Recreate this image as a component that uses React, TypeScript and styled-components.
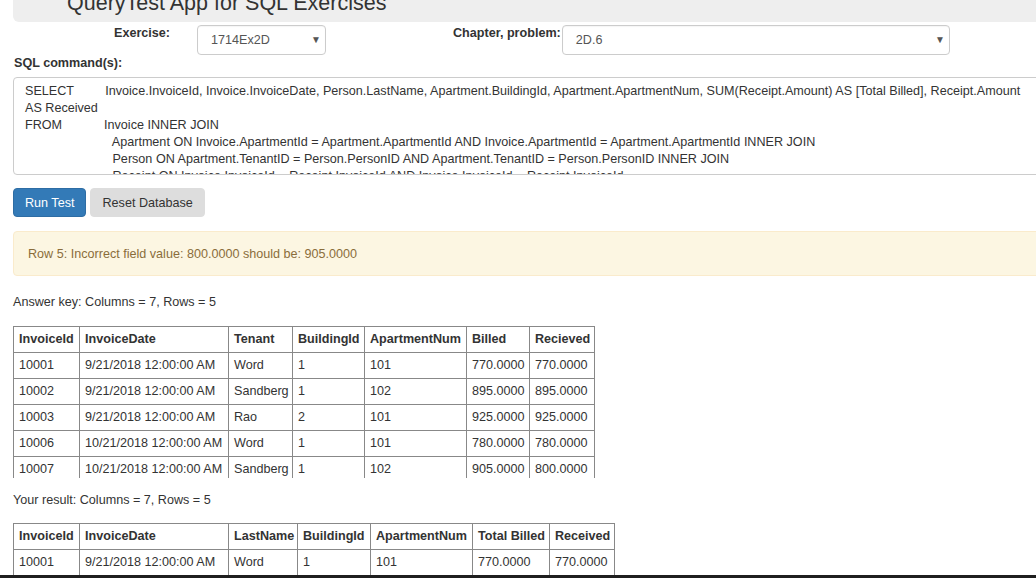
import React from 'react';
import styled, { createGlobalStyle } from 'styled-components';

const GlobalStyle = createGlobalStyle`
  html, body {
    margin: 0;
    padding: 0;
    background: #fff;
    overflow: hidden;
  }
  body {
    font-family: "Liberation Sans", Arial, sans-serif;
    font-size: 12.6px;
    color: #333;
  }
  * { box-sizing: border-box; }
`;

const Page = styled.div`
  padding-left: 13px;
  width: 1036px;
  height: 578px;
  overflow: hidden;
`;

const Banner = styled.div`
  width: calc(100% + 40px);
  height: 22px;
  background: #eee;
  border-bottom-left-radius: 6px;
  padding-left: 54px;
  overflow: hidden;
`;

const Title = styled.h1`
  margin: -8px 0 0 0;
  font-size: 21.5px;
  line-height: 22px;
  font-weight: normal;
  color: #333;
  white-space: nowrap;
`;

const FormRow = styled.div`
  display: flex;
  align-items: flex-start;
  margin-top: 3px;
  padding-left: 101px;
`;

const FieldLabel = styled.label<{ $gap: number }>`
  font-weight: bold;
  line-height: 14px;
  padding-top: 1px;
  margin-right: ${p => p.$gap}px;
  white-space: nowrap;
`;

const FakeSelect = styled.div<{ $w: number; $after?: number }>`
  width: ${p => p.$w}px;
  height: 30px;
  margin-right: ${p => p.$after || 0}px;
  border: 1px solid #ccc;
  border-radius: 4px;
  display: flex;
  align-items: center;
  justify-content: space-between;
  padding: 0 4px 0 13px;
  color: #555;
  background: #fff;
  box-shadow: inset 0 1px 1px rgba(0, 0, 0, 0.04);
`;

const Caret = styled.span`
  font-size: 10px;
  color: #555;
  line-height: 1;
  padding-bottom: 1px;
`;

const SectionLabel = styled.div`
  font-weight: bold;
  line-height: 14px;
  margin-top: 1px;
  padding-left: 1px;
`;

const SqlBox = styled.textarea`
  display: block;
  width: calc(100% + 40px);
  height: 98px;
  margin-top: 7px;
  padding: 5px 11px;
  border: 1px solid #ccc;
  border-radius: 4px;
  font-family: "Liberation Sans", Arial, sans-serif;
  font-size: 12.6px;
  line-height: 17px;
  color: #333;
  white-space: pre;
  overflow: hidden;
  resize: none;
  outline: none;
`;

const ButtonRow = styled.div`
  display: flex;
  gap: 4px;
  margin-top: 13px;
`;

const Button = styled.button<{ $primary?: boolean }>`
  height: 29px;
  padding: 0 11px;
  font-family: "Liberation Sans", Arial, sans-serif;
  font-size: 12.6px;
  border-radius: 4px;
  border: 1px solid ${p => (p.$primary ? '#2e6da4' : '#ddd')};
  background: ${p => (p.$primary ? '#337ab7' : '#ddd')};
  color: ${p => (p.$primary ? '#fff' : '#333')};
  cursor: pointer;
`;

const Alert = styled.div`
  width: calc(100% + 40px);
  height: 45px;
  margin-top: 14px;
  padding: 0 14px;
  display: flex;
  align-items: center;
  background: #fcf6e2;
  border: 1px solid #faebcc;
  border-radius: 4px;
  color: #8a6d3b;
`;

const Caption = styled.div<{ $top: number }>`
  margin-top: ${p => p.$top}px;
  line-height: 17px;
`;

const TableClip = styled.div<{ $h?: number; $top: number }>`
  margin-top: ${p => p.$top}px;
  height: ${p => (p.$h ? `${p.$h}px` : 'auto')};
  overflow: hidden;
`;

const Grid = styled.table`
  border-collapse: collapse;
  table-layout: fixed;
  border: 1px solid #888;
`;

const Col = styled.col<{ $w: number }>`
  width: ${p => p.$w}px;
`;

const Th = styled.th`
  border: 1px solid #888;
  padding: 4px 3px 4px 5px;
  line-height: 17px;
  text-align: left;
  font-weight: bold;
  white-space: nowrap;
  overflow: hidden;
`;

const Td = styled.td`
  border: 1px solid #888;
  padding: 4px 3px 4px 5px;
  line-height: 17px;
  white-space: nowrap;
  overflow: hidden;
`;

const WindowEdge = styled.div`
  position: fixed;
  left: 0;
  right: 0;
  bottom: 0;
  height: 3px;
  background: #1f1f1f;
`;

const pad = (n: number) => ' '.repeat(n);

const sql = [
  `SELECT${pad(9)}Invoice.InvoiceId, Invoice.InvoiceDate, Person.LastName, Apartment.BuildingId, Apartment.ApartmentNum, SUM(Receipt.Amount) AS [Total Billed], Receipt.Amount`,
  'AS Received',
  `FROM${pad(12)}Invoice INNER JOIN`,
  `${pad(25)}Apartment ON Invoice.ApartmentId = Apartment.ApartmentId AND Invoice.ApartmentId = Apartment.ApartmentId INNER JOIN`,
  `${pad(25)}Person ON Apartment.TenantID = Person.PersonID AND Apartment.TenantID = Person.PersonID INNER JOIN`,
  `${pad(25)}Receipt ON Invoice.InvoiceId = Receipt.InvoiceId AND Invoice.InvoiceId = Receipt.InvoiceId`,
  'GROUP BY Invoice.InvoiceId, Invoice.InvoiceDate, Person.LastName, Apartment.BuildingId, Apartment.ApartmentNum, Receipt.Amount',
].join('\n');

const answerCols = ['InvoiceId', 'InvoiceDate', 'Tenant', 'BuildingId', 'ApartmentNum', 'Billed', 'Recieved'];
const answerWidths = [66, 149, 64, 72, 102, 63, 65];
const answerRows = [
  ['10001', '9/21/2018 12:00:00 AM', 'Word', '1', '101', '770.0000', '770.0000'],
  ['10002', '9/21/2018 12:00:00 AM', 'Sandberg', '1', '102', '895.0000', '895.0000'],
  ['10003', '9/21/2018 12:00:00 AM', 'Rao', '2', '101', '925.0000', '925.0000'],
  ['10006', '10/21/2018 12:00:00 AM', 'Word', '1', '101', '780.0000', '780.0000'],
  ['10007', '10/21/2018 12:00:00 AM', 'Sandberg', '1', '102', '905.0000', '800.0000'],
];

const resultCols = ['InvoiceId', 'InvoiceDate', 'LastName', 'BuildingId', 'ApartmentNum', 'Total Billed', 'Received'];
const resultWidths = [66, 149, 69, 73, 102, 77, 65];
const resultRows = [
  ['10001', '9/21/2018 12:00:00 AM', 'Word', '1', '101', '770.0000', '770.0000'],
  ['10002', '9/21/2018 12:00:00 AM', 'Sandberg', '1', '102', '895.0000', '895.0000'],
];

interface DataTableProps {
  cols: string[];
  widths: number[];
  rows: string[][];
}

const DataTable: React.FC<DataTableProps> = ({ cols, widths, rows }) => (
  <Grid style={{ width: widths.reduce((a, b) => a + b, 0) }}>
    <colgroup>
      {widths.map((w, i) => (
        <Col key={i} $w={w} />
      ))}
    </colgroup>
    <thead>
      <tr>
        {cols.map(c => (
          <Th key={c}>{c}</Th>
        ))}
      </tr>
    </thead>
    <tbody>
      {rows.map((r, i) => (
        <tr key={i}>
          {r.map((v, j) => (
            <Td key={j}>{v}</Td>
          ))}
        </tr>
      ))}
    </tbody>
  </Grid>
);

const App: React.FC = () => {
  return (
    <Page>
      <GlobalStyle />
      <Banner>
        <Title>QueryTest App for SQL Exercises</Title>
      </Banner>

      <FormRow>
        <FieldLabel $gap={27}>Exercise:</FieldLabel>
        <FakeSelect $w={129} $after={127}>
          <span>1714Ex2D</span>
          <Caret>&#9660;</Caret>
        </FakeSelect>
        <FieldLabel $gap={1}>Chapter, problem:</FieldLabel>
        <FakeSelect $w={388}>
          <span>2D.6</span>
          <Caret>&#9660;</Caret>
        </FakeSelect>
      </FormRow>

      <SectionLabel>SQL command(s):</SectionLabel>
      <SqlBox defaultValue={sql} spellCheck={false} readOnly />

      <ButtonRow>
        <Button $primary>Run Test</Button>
        <Button>Reset Database</Button>
      </ButtonRow>

      <Alert>Row 5: Incorrect field value: 800.0000 should be: 905.0000</Alert>

      <Caption $top={18}>Answer key: Columns = 7, Rows = 5</Caption>
      <TableClip $top={15} $h={152}>
        <DataTable cols={answerCols} widths={answerWidths} rows={answerRows} />
      </TableClip>

      <Caption $top={14}>Your result: Columns = 7, Rows = 5</Caption>
      <TableClip $top={14}>
        <DataTable cols={resultCols} widths={resultWidths} rows={resultRows} />
      </TableClip>

      <WindowEdge />
    </Page>
  );
};

export default App;
